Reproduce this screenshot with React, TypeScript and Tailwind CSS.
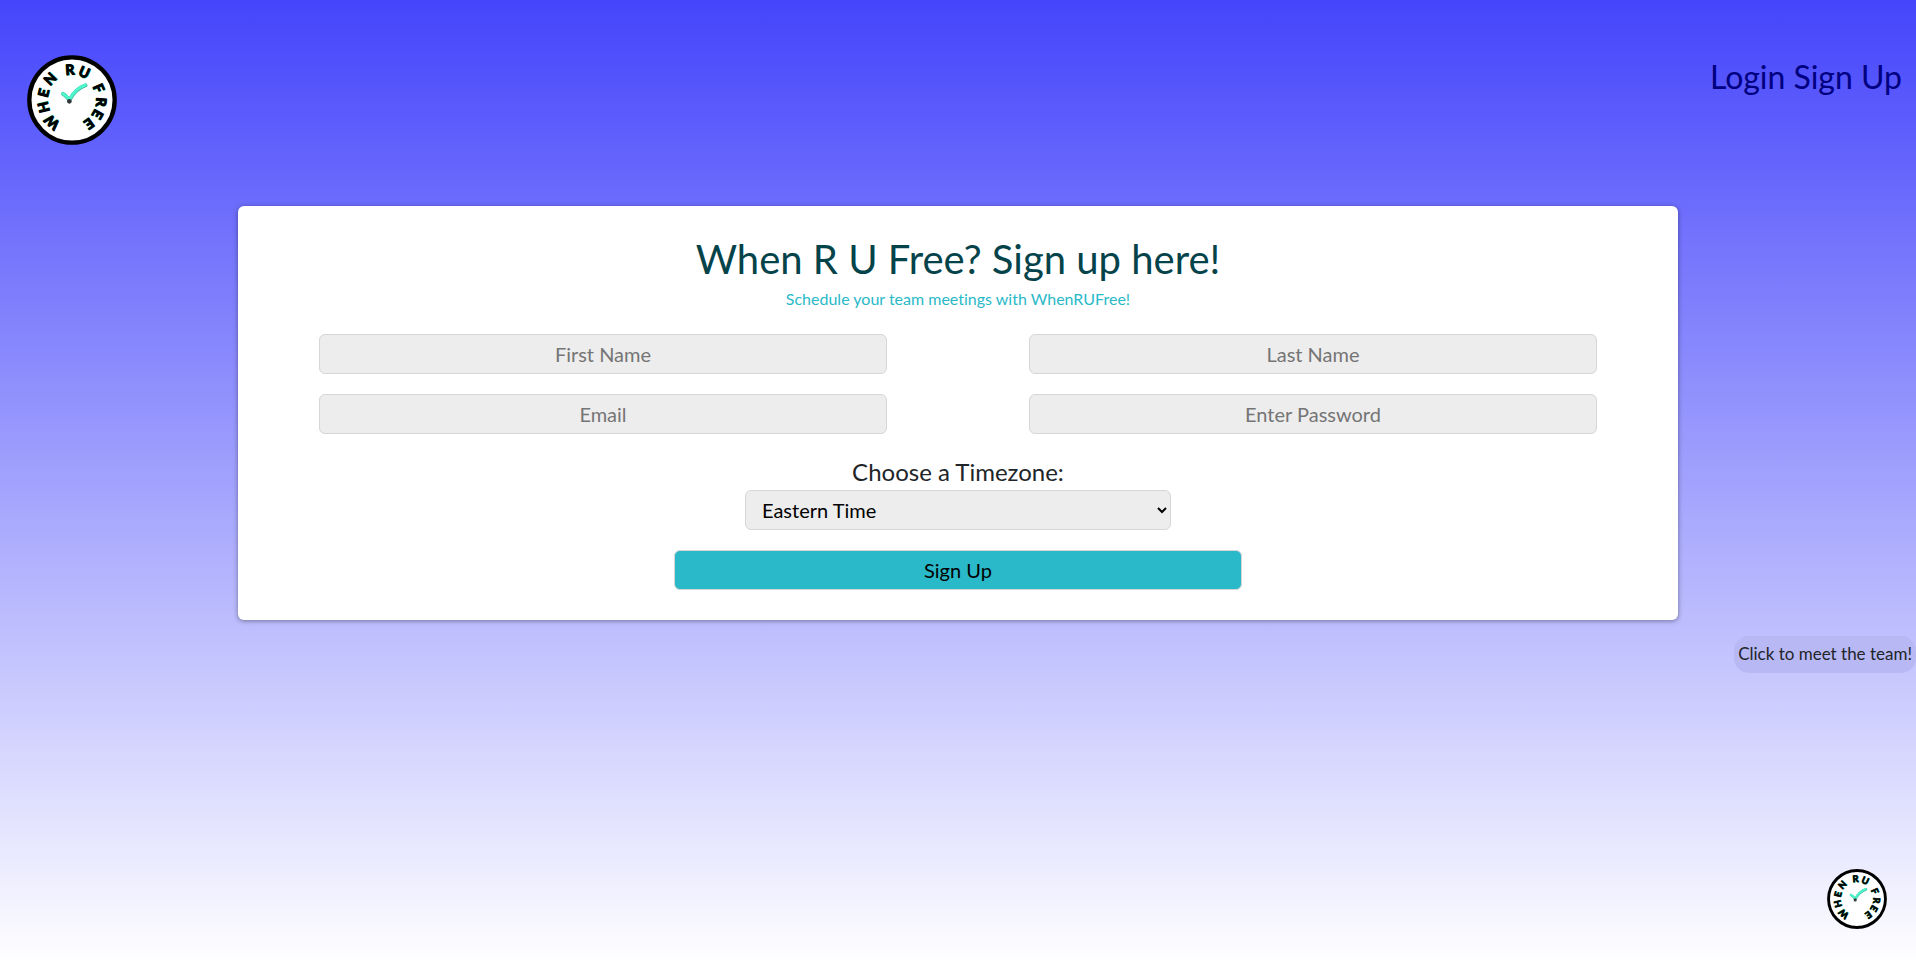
import React from "react";

type Letter = { char: string; angle: number; radius: number };

const letters: Letter[] = [
  { char: "W", angle: -138, radius: 90 },
  { char: "H", angle: -104, radius: 88 },
  { char: "E", angle: -76, radius: 88 },
  { char: "N", angle: -46, radius: 91 },
  { char: "R", angle: -4, radius: 91 },
  { char: "U", angle: 24, radius: 91 },
  { char: "F", angle: 66, radius: 88 },
  { char: "R", angle: 94, radius: 88 },
  { char: "E", angle: 119, radius: 88 },
  { char: "E", angle: 144, radius: 88 },
];

function ClockLogo({ className }: { className: string }) {
  return (
    <svg viewBox="0 0 270 270" className={className} role="img" aria-label="When R U Free">
      <circle cx="135" cy="135" r="128" fill="#fff" stroke="#000" strokeWidth="13" />
      {letters.map(({ char, angle, radius }, i) => (
        <g key={i} transform={`rotate(${angle} 135 135)`} textAnchor="middle" className="font-['Lato'] text-[42px] font-bold" strokeLinejoin="round">
          <text x="136" y={135 - radius + 16} fill="#35d8a6" stroke="#35d8a6" strokeWidth="3">{char}</text>
          <text x="135" y={135 - radius + 15} fill="#000" stroke="#000" strokeWidth="3">{char}</text>
        </g>
      ))}
      <path d="M108 117 C115 120 121 127 127 136 C139 113 155 98 176 91" fill="none" stroke="#2fae91" strokeWidth="11" strokeLinecap="round" strokeLinejoin="round" />
      <path d="M107 116 C114 119 121 126 127 134 C139 112 155 97 175 90" fill="none" stroke="#4ff5cb" strokeWidth="9" strokeLinecap="round" strokeLinejoin="round" />
      <circle cx="127" cy="139" r="7" fill="#303a3a" />
    </svg>
  );
}

const control = "h-10 rounded-md border border-[#d6d6d6] text-xl";
const field = `${control} bg-[#ededed] text-center text-black placeholder:text-[#757575]`;

function Field({ id, label, type = "text" }: { id: string; label: string; type?: string }) {
  return <input id={id} type={type} placeholder={label} aria-label={label} className={field} />;
}

export default function App() {
  return (
    <div className="flex min-h-screen flex-col bg-[linear-gradient(to_bottom,#4545fc,#ffffff)] font-['Lato','Trebuchet_MS',sans-serif] text-[#212529] [font-variant-ligatures:none]">
      <header className="flex items-start justify-between pt-[55px] pr-[14px] pb-[61px] pl-[27px]">
        <a href="#home">
          <ClockLogo className="block size-[90px]" />
        </a>
        <nav className="flex gap-2 text-[32px] leading-[44px] text-[#000080]">
          <a href="#login">Login</a>
          <a href="#signup">Sign Up</a>
        </nav>
      </header>

      <main className="mx-auto w-[calc(75%+3px)] rounded-md bg-white px-[10px] pt-[29px] pb-[30px] shadow-[0_1px_5px_rgba(0,0,0,0.4)]">
        <h1 className="text-center text-[40px] leading-[48px] text-[#05434a]">When R U Free? Sign up here!</h1>
        <p className="mt-1 text-center text-base leading-6 text-[#29b9c9]">Schedule your team meetings with WhenRUFree!</p>
        <form className="mt-[23px] flex flex-col items-center" onSubmit={(e) => e.preventDefault()}>
          <div className="flex w-full flex-wrap justify-between gap-y-5 px-[5%] [&>input]:w-[calc(400%/9)]">
            <Field id="first-name" label="First Name" />
            <Field id="last-name" label="Last Name" />
            <Field id="email" label="Email" type="email" />
            <Field id="password" label="Enter Password" type="password" />
          </div>
          <label htmlFor="timezone" className="mt-5 text-2xl leading-9">Choose a Timezone:</label>
          <select id="timezone" className={`${control} w-[30%] bg-[#ededed] px-3 text-black`}>
            <option>Eastern Time</option>
            <option>Central Time</option>
            <option>Mountain Time</option>
            <option>Pacific Time</option>
          </select>
          <button type="submit" className={`${control} mt-5 w-2/5 bg-[#29b9c9] text-black`}>Sign Up</button>
        </form>
      </main>

      <footer className="mt-4 flex grow flex-col items-end justify-between pb-9">
        <button type="button" className="rounded-[15px] bg-[#b8b8f4] px-1 pt-[5px] pb-[7px] text-[17px] leading-[25px]">Click to meet the team!</button>
        <a href="#team" className="mr-[29px]">
          <ClockLogo className="block size-[60px]" />
        </a>
      </footer>
    </div>
  );
}
